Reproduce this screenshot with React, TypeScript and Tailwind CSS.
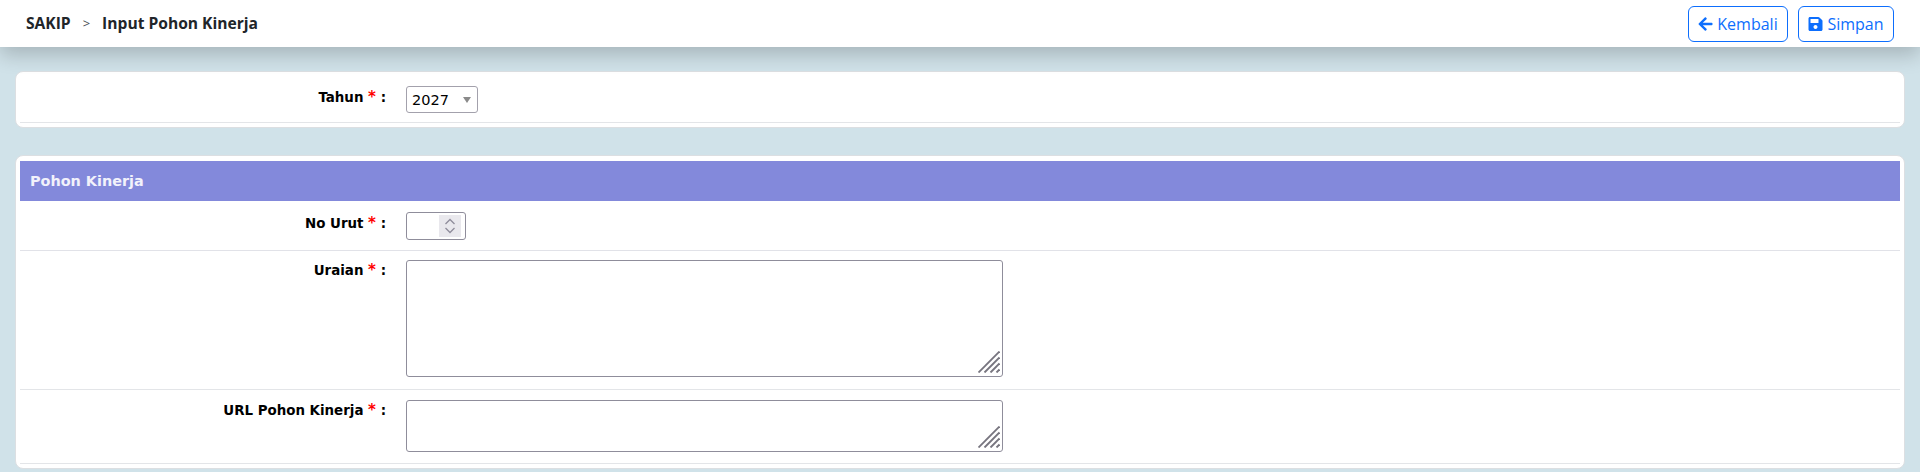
import { FaArrowLeft, FaSave } from "react-icons/fa";

const labelFont = "font-['DejaVu_Sans',sans-serif]";

function FormLabel({ text, offset = "mt-[2px]" }: { text: string; offset?: string }) {
  return (
    <label className={`${offset} w-[366px] shrink-0 text-right text-[13.4px] leading-[16px] font-bold text-black ${labelFont}`}>
      {text} <span className="text-[15px] leading-[16px] text-[#ff0000]">*</span> :
    </label>
  );
}

function ResizeGrip() {
  return (
    <svg viewBox="0 0 22 22" className="pointer-events-none absolute right-[3px] bottom-[4px] h-[22px] w-[22px] stroke-[#77757f]" strokeWidth="1.9">
      <path d="M0.5 21.5 L21.5 0.5" />
      <path d="M6.5 21.5 L21.5 6.5" />
      <path d="M12.5 21.5 L21.5 12.5" />
      <path d="M18.5 21.5 L21.5 18.5" />
    </svg>
  );
}

function TextArea({ height }: { height: string }) {
  return (
    <div className={`relative w-[597px] ${height}`}>
      <textarea className="block h-full w-full resize-none rounded-[3px] border border-[#8f8d9b] bg-white outline-none" />
      <ResizeGrip />
    </div>
  );
}

export default function App() {
  return (
    <div className="h-[472px] overflow-hidden bg-[#d0e2e9] font-['Open_Sans',sans-serif]">
      <header className="relative z-10 flex h-[47px] items-center justify-between bg-white pr-[26px] pl-[26px] shadow-[0_8px_20px_rgba(0,0,0,0.2)]">
        <nav className="flex items-center text-[15.6px] font-bold text-[#212529]">
          <span>SAKIP</span>
          <span className="mx-[12px] text-[13px] font-normal text-[#495057]">&gt;</span>
          <span>Input Pohon Kinerja</span>
        </nav>
        <div className="flex gap-[10px]">
          <button className="flex h-[36px] w-[100px] items-center justify-center gap-[4px] rounded-[6px] border border-[#0d6efd] text-[16px] text-[#0d6efd]">
            <FaArrowLeft className="h-[16px] w-[15px]" />
            Kembali
          </button>
          <button className="flex h-[36px] w-[96px] items-center justify-center gap-[4px] rounded-[6px] border border-[#0d6efd] text-[16px] text-[#0d6efd]">
            <FaSave className="h-[16px] w-[15px]" />
            Simpan
          </button>
        </div>
      </header>

      <main className="flex flex-col gap-[27px] px-[15px] pt-[24px]">
        <section className="h-[57px] rounded-[8px] border border-[#dcdfe2] bg-white px-[4px]">
          <div className="flex h-[51px] gap-[20px] border-b-[1.5px] border-[#e3e5e8] pt-[14px]">
            <FormLabel text="Tahun" offset="mt-[3px]" />
            <div className="relative h-[27px] w-[72px]">
              <select className={`h-full w-full appearance-none rounded-[3px] border border-[#a3a1ac] bg-white pt-[3px] pl-[5px] text-[14.5px] text-black outline-none ${labelFont}`} defaultValue="2027">
                <option>2027</option>
              </select>
              <span className="pointer-events-none absolute top-[11px] right-[7px] h-0 w-0 border-x-[4px] border-t-[6px] border-x-transparent border-t-[#8a8a8a]" />
            </div>
          </div>
        </section>

        <section className="h-[314px] rounded-[8px] border border-[#dcdfe2] bg-white px-[4px] pt-[5px]">
          <h2 className={`flex h-[40px] items-center bg-[#8389db] pt-[2px] pl-[10px] text-[14.4px] font-bold text-[#f2f2fb] ${labelFont}`}>
            Pohon Kinerja
          </h2>
          <div className="flex h-[50px] gap-[20px] border-b-[1.5px] border-[#e1e2e8] pt-[11px]">
            <FormLabel text="No Urut" offset="mt-[3px]" />
            <div className="relative h-[28px] w-[60px]">
              <input className="block h-full w-full rounded-[3px] border border-[#8f8d9b] bg-white outline-none" />
              <span className="absolute top-[3px] right-[5px] flex h-[22px] w-[22px] items-center justify-center bg-[#e9e8ed]">
                <svg viewBox="0 0 12 16" className="h-[16px] w-[12px] fill-none stroke-[#8f8d9b]" strokeWidth="1.3">
                  <path d="M1.5 6 L6 1.5 L10.5 6" />
                  <path d="M1.5 10 L6 14.5 L10.5 10" />
                </svg>
              </span>
            </div>
          </div>
          <div className="flex h-[139px] gap-[20px] border-b-[1.5px] border-[#e3e5e8] pt-[9px]">
            <FormLabel text="Uraian" />
            <TextArea height="h-[117px]" />
          </div>
          <div className="flex h-[74px] gap-[20px] border-b-[1.5px] border-[#e3e5e8] pt-[10px]">
            <FormLabel text="URL Pohon Kinerja" />
            <TextArea height="h-[52px]" />
          </div>
        </section>
      </main>
    </div>
  );
}
